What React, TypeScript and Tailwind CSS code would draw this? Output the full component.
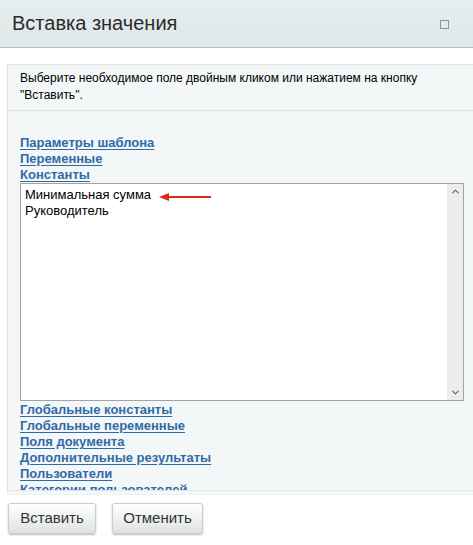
import { ChevronUp, ChevronDown } from "lucide-react"

const topLinks = ["Параметры шаблона", "Переменные", "Константы"]
const bottomLinks = [
  "Глобальные константы",
  "Глобальные переменные",
  "Поля документа",
  "Дополнительные результаты",
  "Пользователи",
  "Категории пользователей",
]

function LinkItem({ text }: { text: string }) {
  return (
    <a
      href="#"
      className="block h-4 leading-4 text-[13px] font-bold text-[#2f6ba6] underline underline-offset-[2px]"
    >
      {text}
    </a>
  )
}

function App() {
  return (
    <div className="w-[473px] h-[545px] bg-white overflow-hidden font-['Liberation_Sans',Arial,sans-serif]">
      <div className="h-[48px] bg-gradient-to-b from-[#e6edef] to-[#dfe7e9] border-b border-[#b8bebf] flex items-center justify-between pl-3 pr-6">
        <h1 className="text-[20px] text-[#2b2b2b] leading-none pb-[2px]">Вставка значения</h1>
        <span className="w-[9px] h-[9px] border border-[#8a9396] mt-[2px]" />
      </div>

      <div className="pt-4 pl-[7px]">
        <div className="w-[480px] h-[427px] bg-[#f4f7f7] border border-[#dfe5e5] overflow-hidden">
          <div className="h-[46px] border-b border-[#dde3e3] pl-3 pt-[5px] text-[12px] leading-[17px] text-black">
            Выберите необходимое поле двойным кликом или нажатием на кнопку
            <br />
            "Вставить".
          </div>
          <div className="pl-3 pt-[24px]">
            {topLinks.map((t) => (
              <LinkItem key={t} text={t} />
            ))}
            <div className="relative w-[444px] h-[218px] bg-white border border-[#a3a3a3] flex">
              <div className="flex-1 pl-1 pt-[3px] text-[13px] leading-4 text-black">
                <div>Минимальная сумма</div>
                <div>Руководитель</div>
              </div>
              <div className="w-[16px] bg-[#ececec] flex flex-col justify-between items-center py-[2px]">
                <ChevronUp size={11} strokeWidth={2.5} className="text-[#606060]" />
                <ChevronDown size={11} strokeWidth={2.5} className="text-[#606060]" />
              </div>
              <svg
                className="absolute left-[138px] top-[8px]"
                width="54"
                height="10"
                viewBox="0 0 54 10"
              >
                <line x1="8" y1="5" x2="52" y2="5" stroke="#e0261e" strokeWidth="2" />
                <polygon points="0,5 10,1 10,9" fill="#e0261e" />
              </svg>
            </div>
            <div className="pt-[1px]">
              {bottomLinks.map((t) => (
                <LinkItem key={t} text={t} />
              ))}
            </div>
          </div>
        </div>
        <div className="h-[4px] bg-[#f4f8f8] border-b border-[#eef2f2]" />
      </div>

      <div className="flex gap-4 pl-2 pt-[8px]">
        <button className="w-[88px] h-[31px] rounded-[3px] border border-[#c8cccc] bg-gradient-to-b from-white to-[#dfe3e3] shadow-[0_1px_2px_rgba(0,0,0,0.25)] text-[15px] text-[#333]">
          Вставить
        </button>
        <button className="w-[91px] h-[31px] rounded-[3px] border border-[#c8cccc] bg-gradient-to-b from-white to-[#dfe3e3] shadow-[0_1px_2px_rgba(0,0,0,0.25)] text-[15px] text-[#333]">
          Отменить
        </button>
      </div>
    </div>
  )
}

export default App
